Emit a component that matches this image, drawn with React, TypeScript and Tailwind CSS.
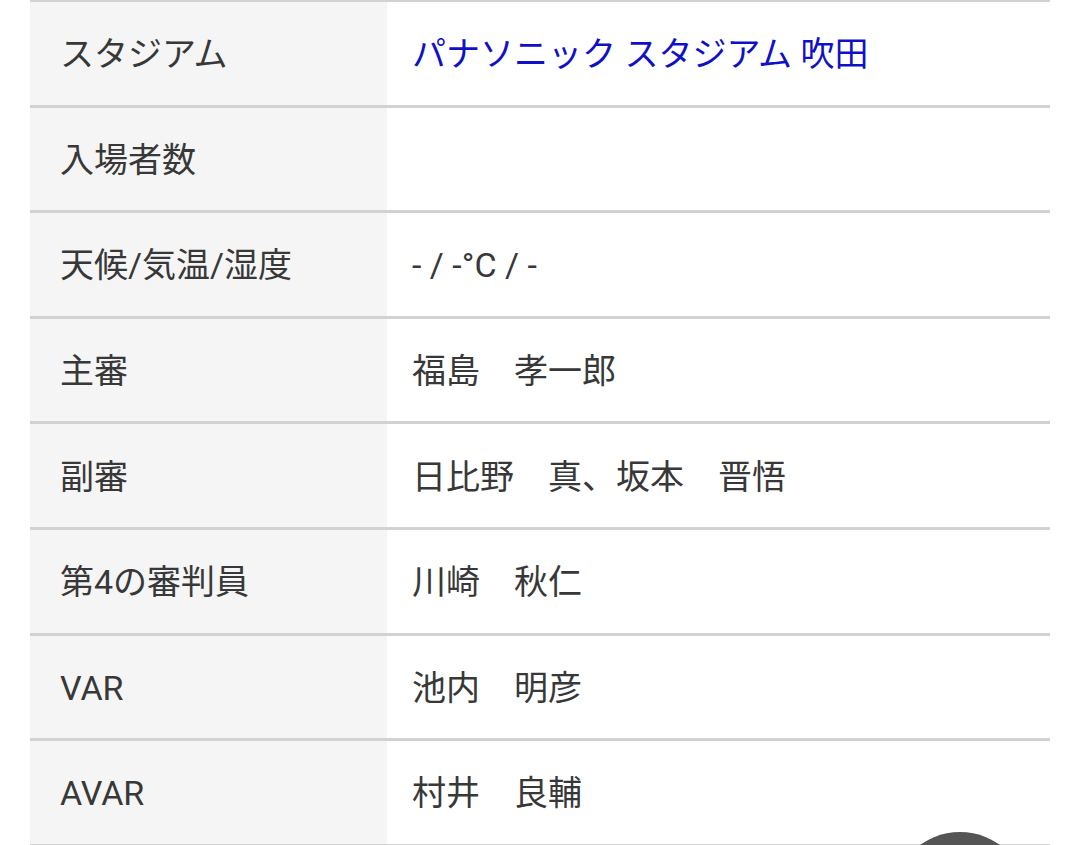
import React from "react";

const rows: { label: string; value: string; link?: boolean }[] = [
  { label: "スタジアム", value: "パナソニック スタジアム 吹田", link: true },
  { label: "入場者数", value: "" },
  { label: "天候/気温/湿度", value: "- / -°C / -" },
  { label: "主審", value: "福島　孝一郎" },
  { label: "副審", value: "日比野　真、坂本　晋悟" },
  { label: "第4の審判員", value: "川崎　秋仁" },
  { label: "VAR", value: "池内　明彦" },
  { label: "AVAR", value: "村井　良輔" },
];

export default function App() {
  return (
    <div
      className="relative h-[845px] w-[1080px] overflow-hidden bg-white"
      style={{ fontFamily: 'Roboto, "Noto Sans CJK JP", "Noto Sans", sans-serif' }}
    >
      <div className="ml-[30px] w-[1020px] border-t-2 border-[#d2d2d2]">
        {rows.map((r) => (
          <div
            key={r.label}
            className="box-border flex h-[105.6px] border-b-[3px] border-[#d2d2d2]"
          >
            <div className="flex w-[357px] items-center bg-[#f5f5f5] pt-[3px] pl-[30px] text-[34px] text-[#383838]">
              {r.label}
            </div>
            <div
              className={
                "flex flex-1 items-center pt-[3px] pl-[25px] text-[34px] " +
                (r.link ? "text-[#1010c8]" : "text-[#383838]")
              }
            >
              {r.value}
            </div>
          </div>
        ))}
      </div>
      <div className="absolute left-[892px] top-[832px] h-[136px] w-[136px] rounded-full bg-[#555555]" />
    </div>
  );
}
